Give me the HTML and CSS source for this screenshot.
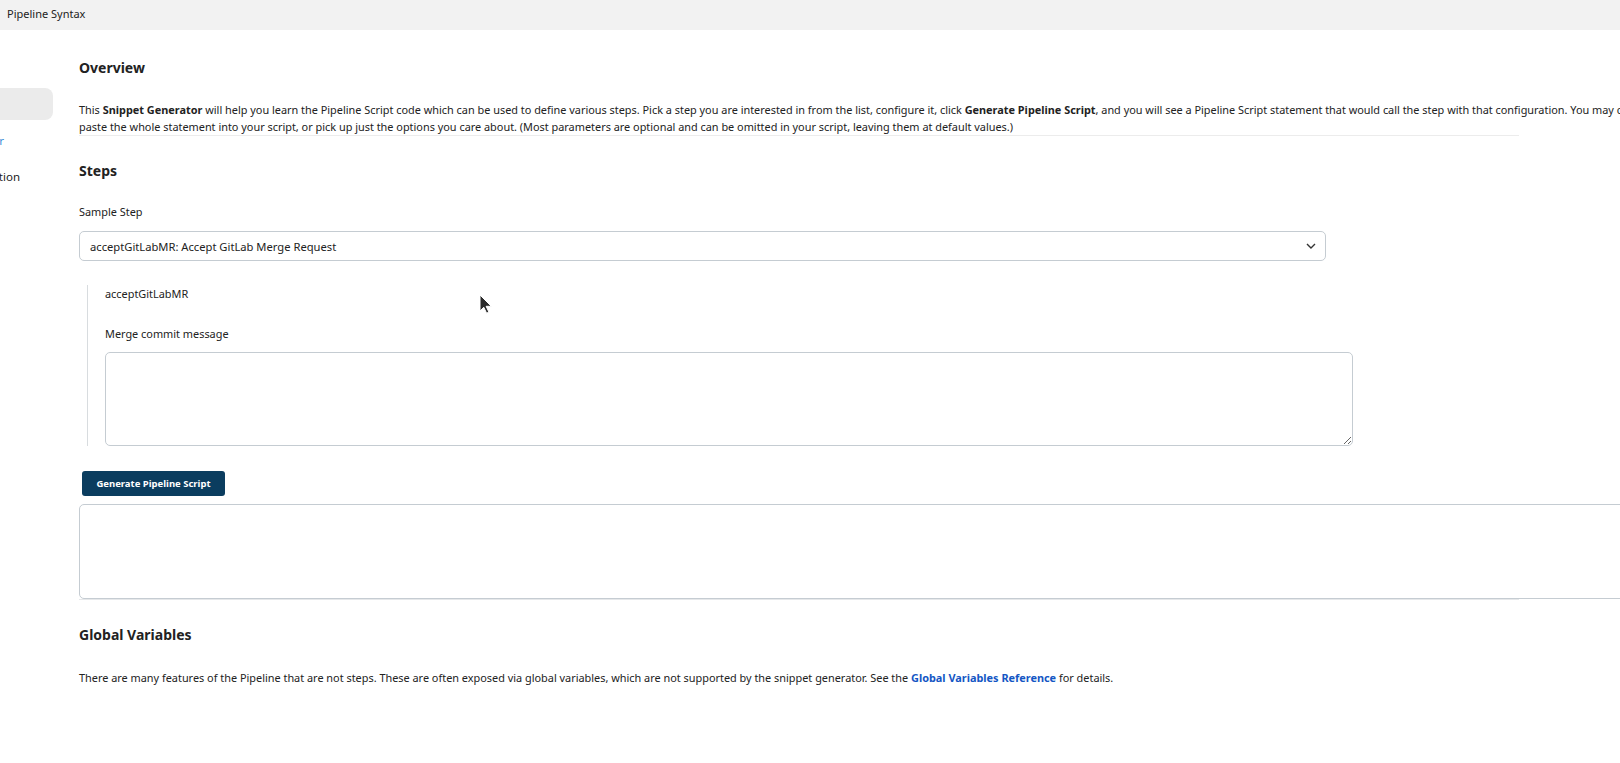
FILE: index.html
```html
<!DOCTYPE html>
<html>
<head>
<meta charset="utf-8">
<link rel="stylesheet" href="styles.css">
</head>
<body>
<header class="topbar">Pipeline Syntax</header>
<div class="page">
  <aside class="sidebar">
    <div class="side-item active"><span>Snippet Generator</span></div>
    <div class="side-item link"><span>Declarative Directive Generator</span></div>
    <div class="side-item last"><span>Online Documentation</span></div>
  </aside>
  <main class="main">
    <h2 class="heading h-overview">Overview</h2>
    <p class="intro">This <b>Snippet Generator</b> will help you learn the Pipeline Script code which can be used to define various steps. Pick a step you are interested in from the list, configure it, click <b>Generate Pipeline Script</b>, and you will see a Pipeline Script statement that would call the step with that configuration. You may copy and<br>paste the whole statement into your script, or pick up just the options you care about. (Most parameters are optional and can be omitted in your script, leaving them at default values.)</p>
    <div class="rule"></div>
    <h2 class="heading h-steps">Steps</h2>
    <div class="label">Sample Step</div>
    <div class="select">
      <span>acceptGitLabMR: Accept GitLab Merge Request</span>
      <svg class="chev" width="10" height="6" viewBox="0 0 10 6"><path d="M1 1l4 4 4-4" fill="none" stroke="#333" stroke-width="1.4"/></svg>
    </div>
    <div class="stepbox">
      <div class="stepname">acceptGitLabMR</div>
      <div class="field-label">Merge commit message</div>
      <textarea class="ta"></textarea>
    </div>
    <button class="gen">Generate Pipeline Script</button>
    <textarea class="out"></textarea>
    <div class="rule rule2"></div>
    <h2 class="heading h-global">Global Variables</h2>
    <p class="gv">There are many features of the Pipeline that are not steps. These are often exposed via global variables, which are not supported by the snippet generator. See the <a href="#">Global Variables Reference</a> for details.</p>
  </main>
</div>
<svg class="cursor" width="13" height="20" viewBox="0 0 13 20"><path d="M1 1v16l3.8-3.7 2.8 5.9 2.3-1.1-2.8-5.8H12.3z" fill="#2b2b2b" stroke="#fff" stroke-width="1"/></svg>
</body>
</html>
```
FILE: styles.css
```css
html, body {
  margin: 0;
  padding: 0;
  overflow: hidden;
  background: #fff;
}
body {
  font-family: "Noto Sans", "Open Sans", sans-serif;
  font-size: 10.9px;
  color: #222;
  width: 1620px;
  height: 763px;
  position: relative;
}
.topbar {
  height: 30px;
  background: #f2f2f2;
  line-height: 28px;
  padding-left: 7px;
  font-size: 11px;
  color: #222;
}
.page {
  display: flex;
  gap: 26px;
}
.sidebar {
  width: 53px;
  flex: none;
  overflow: hidden;
  padding-top: 58px;
  display: flex;
  flex-direction: column;
  gap: 4px;
}
.side-item {
  height: 32px;
  display: flex;
  align-items: center;
  justify-content: flex-end;
  white-space: nowrap;
  font-size: 11.5px;
  color: #222;
}
.side-item span { padding-right: 34px; }
.side-item.active {
  background: #ebebeb;
  border-radius: 0 8px 8px 0;
}
.side-item.active span { visibility: hidden; }
.side-item.link { color: #3a8fd8; }
.side-item.link span { padding-right: 49px; }
.side-item.last span { padding-right: 33px; }
.main {
  width: 1440px;
  flex: none;
  padding-top: 1px;
}
.heading {
  margin: 0;
  font-size: 14px;
  font-weight: 700;
  color: #222;
  line-height: 20px;
}
.h-overview { margin-top: 27px; }
.intro {
  margin: 23px 0 0;
  line-height: 17px;
  white-space: nowrap;
}
.rule {
  height: 1px;
  background: #ececec;
  margin-top: 0;
}
.h-steps { margin-top: 25px; }
.label {
  margin-top: 23px;
  line-height: 16px;
}
.select {
  margin-top: 11px;
  width: 1247px;
  height: 30px;
  box-sizing: border-box;
  border: 1px solid #c5ccd2;
  border-radius: 5px;
  display: flex;
  align-items: center;
  justify-content: space-between;
  padding: 0 9px 0 10px;
  font-size: 11.2px;
}
.stepbox {
  margin: 24px 0 0 8px;
  border-left: 1px solid #d8dcdf;
  padding-left: 17px;
  padding-top: 1px;
}
.stepname { line-height: 16px; margin-top: 0; }
.field-label { line-height: 16px; margin-top: 24px; }
.ta, .out {
  display: block;
  box-sizing: border-box;
  border: 1px solid #c5ccd2;
  border-radius: 5px;
  font-family: inherit;
  font-size: 11px;
  background: #fff;
  margin: 0;
  padding: 4px 6px;
}
.ta {
  margin-top: 10px;
  width: 1248px;
  height: 94px;
}
.gen {
  display: block;
  margin: 25px 0 0 3px;
  width: 143px;
  height: 25px;
  background: #0b3d5f;
  color: #fff;
  border: none;
  border-radius: 3px;
  font-family: inherit;
  font-size: 9.5px;
  font-weight: 700;
  padding: 0;
}
.out {
  margin-top: 8px;
  width: 1600px;
  height: 95px;
  resize: none;
}
.rule2 { width: 1440px; background: #e6e8ea; }
.h-global { margin-top: 25px; }
.gv {
  margin: 24px 0 0;
  line-height: 17px;
}
.gv a {
  color: #1456c4;
  font-weight: 700;
  text-decoration: none;
}
.cursor {
  position: absolute;
  left: 479px;
  top: 294px;
}
```
